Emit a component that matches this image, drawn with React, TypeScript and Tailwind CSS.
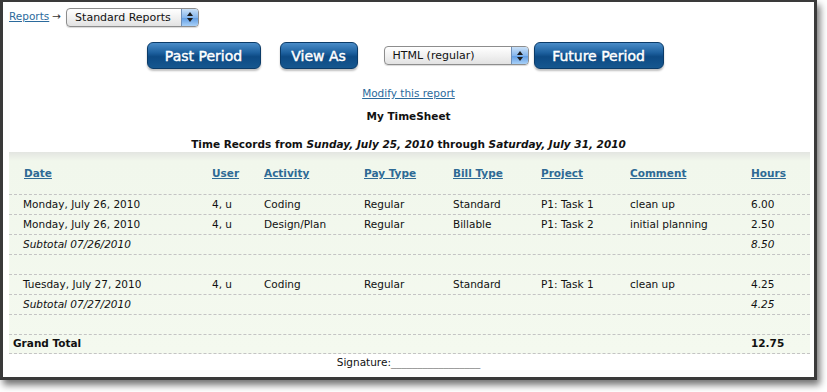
import React from "react";

type Row = {
  date: string;
  user: string;
  activity: string;
  payType: string;
  billType: string;
  project: string;
  comment: string;
  hours: string;
};

const cols = "grid grid-cols-[203px_52px_100px_89px_88px_89px_121px_59px]";

const groups: { rows: Row[]; subtotal: string; total: string }[] = [
  {
    rows: [
      { date: "Monday, July 26, 2010", user: "4, u", activity: "Coding", payType: "Regular", billType: "Standard", project: "P1: Task 1", comment: "clean up", hours: "6.00" },
      { date: "Monday, July 26, 2010", user: "4, u", activity: "Design/Plan", payType: "Regular", billType: "Billable", project: "P1: Task 2", comment: "initial planning", hours: "2.50" },
    ],
    subtotal: "Subtotal 07/26/2010",
    total: "8.50",
  },
  {
    rows: [
      { date: "Tuesday, July 27, 2010", user: "4, u", activity: "Coding", payType: "Regular", billType: "Standard", project: "P1: Task 1", comment: "clean up", hours: "4.25" },
    ],
    subtotal: "Subtotal 07/27/2010",
    total: "4.25",
  },
];

const headers = ["Date", "User", "Activity", "Pay Type", "Bill Type", "Project", "Comment", "Hours"];

function Select({ label, width }: { label: string; width: string }) {
  return (
    <div
      className={`flex items-center h-[19px] ${width} rounded-[4px] border border-[#8d8d8d] bg-[linear-gradient(#ffffff,#f1f1f1_50%,#e2e2e2)] shadow-[0_1px_1px_rgba(0,0,0,0.15)] overflow-hidden`}
    >
      <span className="flex-1 pl-[8px] text-[11px] text-[#111] leading-none">{label}</span>
      <span className="flex flex-col items-center justify-center w-[17px] h-full border-l border-[#6e8fb8] bg-[linear-gradient(#c9e0f7,#86b6ec_50%,#5e9be3_51%,#a8d0f7)] gap-[2px]">
        <span className="block w-0 h-0 border-l-[3px] border-r-[3px] border-b-[4px] border-l-transparent border-r-transparent border-b-[#1b1b1b]" />
        <span className="block w-0 h-0 border-l-[3px] border-r-[3px] border-t-[4px] border-l-transparent border-r-transparent border-t-[#1b1b1b]" />
      </span>
    </div>
  );
}

function BlueButton({ label, width }: { label: string; width: string }) {
  return (
    <button
      className={`h-[27px] ${width} rounded-[6px] border border-[#0b3b68] bg-[linear-gradient(#4a8cc8,#1c5f9d_40%,#0d4a84_55%,#16578f)] text-white text-[14px] leading-none shadow-[0_2px_2px_rgba(0,0,0,0.25)] [-webkit-text-stroke:0.45px_white]`}
    >
      {label}
    </button>
  );
}

export default function App() {
  return (
    <div className="w-[827px] h-[392px] bg-white overflow-hidden font-['DejaVu_Sans','Verdana',sans-serif] text-[#111]">
      <div className="w-[817px] h-[380px] border-l-[3px] border-r-[3px] border-t-[2px] border-b-[3px] border-[#3a3a3a] bg-white shadow-[3px_5px_7px_rgba(0,0,0,0.55)] flex flex-col">
        {/* breadcrumb */}
        <div className="flex items-center h-[28px] pl-[6px] pt-[2px] text-[10.5px]">
          <a href="#" className="text-[#2b6a9c] underline">Reports</a>
          <span className="ml-[3px] mr-[5px] text-[#333]">→</span>
          <Select label="Standard Reports" width="w-[133px]" />
        </div>

        {/* period buttons */}
        <div className="flex items-center justify-center h-[41px] mt-[5px] pr-[7px]">
          <BlueButton label="Past Period" width="w-[114px]" />
          <div className="w-[19px]" />
          <BlueButton label="View As" width="w-[78px]" />
          <div className="w-[26px]" />
          <Select label="HTML (regular)" width="w-[145px]" />
          <div className="w-[5px]" />
          <BlueButton label="Future Period" width="w-[130px]" />
        </div>

        <div className="flex flex-col items-center text-[10.5px]">
          <a href="#" className="mt-[10px] text-[#2b6a9c] underline leading-[14px]">Modify this report</a>
          <div className="mt-[9px] font-bold leading-[14px]">My TimeSheet</div>
          <div className="mt-[14px] font-bold leading-[14px]">
            Time Records from <i>Sunday, July 25, 2010</i> through <i>Saturday, July 31, 2010</i>
          </div>
        </div>

        {/* report table */}
        <div className="mt-[1px] ml-[6px] w-[801px] text-[10.5px] bg-[linear-gradient(#e3e5e1,#f1f7ec_9px,#f4f9ef)]">
          <div className={`${cols} h-[42px] items-center pt-[1px]`}>
            {headers.map((h, i) => (
              <div key={h} className={i === 0 ? "pl-[15px]" : ""}>
                <a href="#" className="font-bold text-[#2e6a95] underline">{h}</a>
              </div>
            ))}
          </div>

          {groups.map((g, gi) => (
            <React.Fragment key={gi}>
              {g.rows.map((r, ri) => (
                <div key={ri} className={`${cols} h-[20px] items-center border-t border-dashed border-[#c4c4c4]`}>
                  <div className="pl-[14px]">{r.date}</div>
                  <div>{r.user}</div>
                  <div>{r.activity}</div>
                  <div>{r.payType}</div>
                  <div>{r.billType}</div>
                  <div>{r.project}</div>
                  <div>{r.comment}</div>
                  <div>{r.hours}</div>
                </div>
              ))}
              <div className={`${cols} h-[20px] items-center border-t border-dashed border-[#c4c4c4] italic`}>
                <div className="pl-[14px] col-span-7">{g.subtotal}</div>
                <div>{g.total}</div>
              </div>
              <div className="h-[20px] border-t border-dashed border-[#c4c4c4]" />
            </React.Fragment>
          ))}

          <div className={`${cols} h-[20px] items-center border-t border-b border-dashed border-[#c4c4c4] font-bold`}>
            <div className="pl-[4px] col-span-7">Grand Total</div>
            <div>12.75</div>
          </div>
        </div>

        <div className="flex justify-center mt-[1px] text-[10.5px] leading-[14px] text-[#111]">
          Signature:<span className="text-[#888]">_________________</span>
        </div>
      </div>
    </div>
  );
}
